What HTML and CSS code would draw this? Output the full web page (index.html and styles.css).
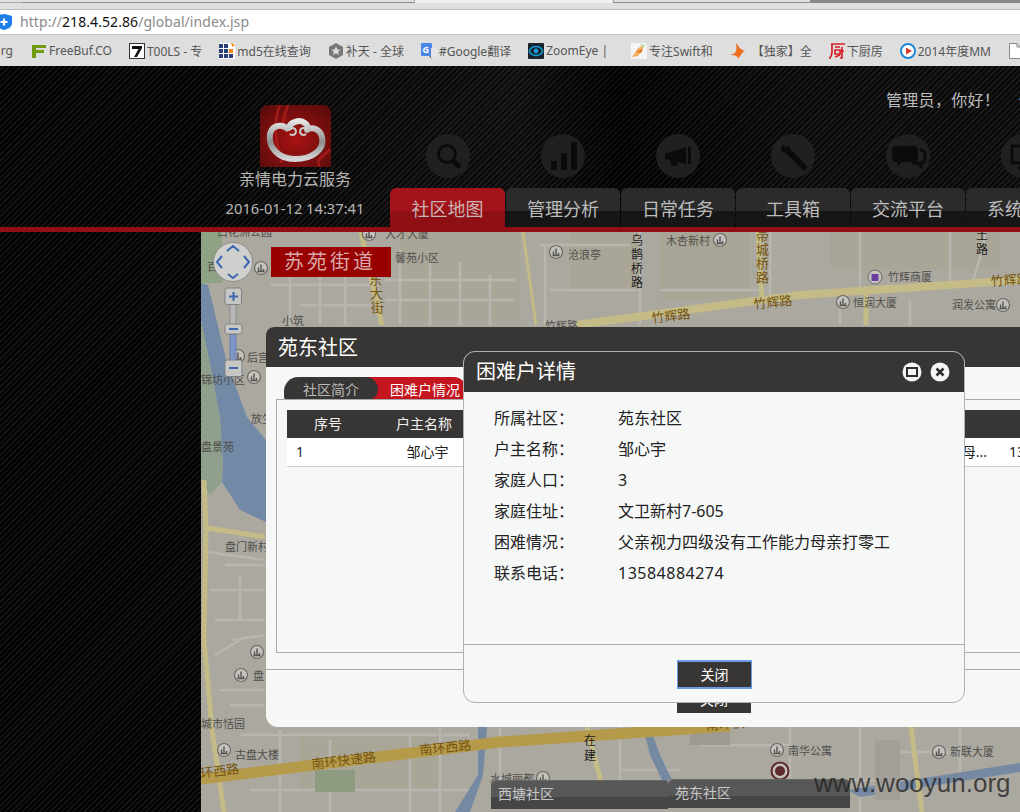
FILE: index.html
```html
<!DOCTYPE html>
<html lang="zh">
<head>
<meta charset="utf-8">
<title>亲情电力云服务</title>
<link rel="stylesheet" href="styles.css">
</head>
<body>
<div class="browser">
  <div class="tabstrip"><span class="ts ts-a"></span><span class="ts ts-b"></span><span class="ts ts-c"></span><span class="ts ts-d"></span></div>
  <div class="urlbar">
    <svg class="shield" width="12" height="17" viewBox="0 0 12 17"><path d="M-4 1 L5 0 L12 2 V9 C12 13 8 15 4 16 C0 15 -4 13 -4 9Z" fill="#1e7fe8"/><path d="M4 4.500V11.500M0.500 8H7.500" stroke="#fff" stroke-width="2.200"/></svg>
    <span class="url"><span class="url-dim">http://</span><span class="url-host">218.4.52.86</span><span class="url-dim">/global/index.jsp</span></span>
  </div>
  <div class="bookmarks">
    <span class="bm bm-first">rg</span>
    <span class="bm"><svg width="16" height="16" viewBox="0 0 16 16"><path d="M1 2H15V5H5V7H13V10H5V15H1Z" fill="#6f9a12"/></svg>FreeBuf.CO</span>
    <span class="bm"><svg width="16" height="16" viewBox="0 0 16 16"><rect x=".5" y=".5" width="15" height="15" fill="#fff" stroke="#333"/><path d="M3 3H13V5L8 14H5L9.500 6H3Z" fill="#111"/></svg>T00LS - 专</span>
    <span class="bm"><svg width="16" height="16" viewBox="0 0 16 16"><rect width="16" height="16" fill="#fff"/><path d="M0 1h4v4H0zM5 1h4v4H5zM0 6h4v4H0zM5 6h4v4H5zM0 11h4v4H0zM5 11h4v4H5zM10 11h4v4h-4z" fill="#2a3f78"/><rect x="10" y="6" width="4" height="4" fill="#ef8410"/><path d="M13 0l1 1 1-1-.5 1.500L16 3h-2l-1 1V2L11.500 1z" fill="#ef8410"/></svg>md5在线查询</span>
    <span class="bm"><svg width="16" height="16" viewBox="0 0 16 16"><path d="M8 0L15 4V12L8 16L1 12V4Z" fill="#777"/><path d="M8 3.500l1.400 3 3.100.3-2.400 2 .8 3.200L8 10.300 5.100 12l.8-3.200-2.400-2 3.100-.3z" fill="#ddd"/></svg>补天 - 全球</span>
    <span class="bm"><svg width="16" height="16" viewBox="0 0 16 16"><rect width="11" height="13" rx="1" fill="#4a86e8"/><path d="M8 13l3 3v-3z" fill="#555"/><rect x="10" y="5" width="6" height="10" fill="#e4e4e4"/><text x="1.500" y="10" class="bm-g">G</text></svg>#Google翻译</span>
    <span class="bm"><svg width="16" height="16" viewBox="0 0 16 16"><rect width="16" height="16" rx="1" fill="#16232c"/><ellipse cx="8" cy="8" rx="6.500" ry="4.500" fill="none" stroke="#0e9ad8" stroke-width="1.600"/><circle cx="8" cy="8" r="2.400" fill="#0e9ad8"/></svg>ZoomEye |<span class="bm-pad"></span></span>
    <span class="bm"><svg width="16" height="16" viewBox="0 0 16 16"><rect width="16" height="16" fill="#f4f4f4"/><path d="M1 14L7 5l6-3-2 6-4 5z" fill="#f4b060"/><path d="M9 1l5 1-2 3z" fill="#b8d8a0"/><path d="M5 9l7-3-2 4z" fill="#e07a20"/></svg>专注Swift和</span>
    <span class="bm bm-wide"><svg width="16" height="16" viewBox="0 0 16 16"><path d="M6 0C9 3 9 6 15 8C12 9 11 12 8 16C8 13 6 12 0 12C4 11 8 10 6 0Z" fill="#ee6c1c"/></svg>【独家】全</span>
    <span class="bm"><svg width="16" height="16" viewBox="0 0 16 16"><path d="M2 1H16M3 1V9C3 12 2 14 0 16M6 4H11M6 7H11V11H6ZM6 14L11 12M13 4V15L11 15M11 8L15 8" stroke="#d5222a" stroke-width="1.700" fill="none"/></svg>下厨房</span>
    <span class="bm"><svg width="16" height="16" viewBox="0 0 16 16"><circle cx="8" cy="8" r="7" fill="#fff" stroke="#2087d6" stroke-width="2"/><path d="M6 4.500L12 8 6 11.500Z" fill="#e0382a"/></svg>2014年度MM</span>
    <span class="bm"><svg width="14" height="16" viewBox="0 0 14 16"><path d="M1.500 .5H9L12.500 4V15.500H1.500Z" fill="#fff" stroke="#888"/><path d="M9 .5V4H12.500" fill="none" stroke="#888"/></svg></span>
  </div>
  <div class="app">
    <header class="header">
      <div class="brand">
        <svg class="logo" width="71" height="62" viewBox="0 0 71 62">
          <defs>
            <radialGradient id="logobg" cx="50%" cy="55%" r="65%"><stop offset="0" stop-color="#a81212"/><stop offset="1" stop-color="#5e0c0c"/></radialGradient>
            <linearGradient id="silver" x1="0" y1="0" x2="0" y2="1"><stop offset="0" stop-color="#e4e4e4"/><stop offset=".55" stop-color="#8d8d8d"/><stop offset="1" stop-color="#d5d5d5"/></linearGradient>
          </defs>
          <path d="M9 0H62Q71 0 71 9V62H0V9Q0 0 9 0Z" fill="url(#logobg)"/>
          <path d="M20 0C14 14 14 34 22 58M28 0C24 10 22 18 24 26M60 62C54 54 66 50 70 44" stroke="#b0201c" stroke-width="3" fill="none" opacity=".7"/>
          <path d="M29 25C22 18 12 20 10 29C8 42 18 54 35 54C52 54 65 45 62 32C60 24 52 21 47 25C50 20 42 14 35 17C31 18 29 21 29 25" fill="none" stroke="url(#silver)" stroke-width="6" stroke-linejoin="round"/>
          <path d="M29 26a3.500 3.500 0 1 1 1 3M47 26a3.500 3.500 0 1 0-1 3" fill="none" stroke="#ccc" stroke-width="2"/>
        </svg>
        <div class="brand-name">亲情电力云服务</div>
        <div class="brand-time">2016-01-12 14:37:41</div>
      </div>
      <div class="head-main">
        <div class="userline"><span class="user-hello">管理员，你好！</span><span class="user-link">修改密码</span></div>
        <nav class="nav">
          <div class="nav-item">
            <svg class="nav-icon" width="44" height="44" viewBox="0 0 44 44"><circle cx="22" cy="22" r="22" class="ic-bg"/><circle cx="21" cy="20" r="8.500" class="ic-line"/><path d="M27 27L34 33" class="ic-line ic-thick"/></svg>
            <a class="nav-tab nav-tab-on">社区地图</a>
          </div>
          <div class="nav-item">
            <svg class="nav-icon" width="44" height="44" viewBox="0 0 44 44"><circle cx="22" cy="22" r="22" class="ic-bg"/><path d="M10 27h6v9h-6zM20 19h6v17h-6zM30 8h6v28h-6z" class="ic-fill"/></svg>
            <a class="nav-tab">管理分析</a>
          </div>
          <div class="nav-item">
            <svg class="nav-icon" width="44" height="44" viewBox="0 0 44 44"><circle cx="22" cy="22" r="22" class="ic-bg"/><path d="M9 20L30 13V30L9 25ZM14 26L16 32H22L21 28M32 13H35V30H32Z" class="ic-fill"/></svg>
            <a class="nav-tab">日常任务</a>
          </div>
          <div class="nav-item">
            <svg class="nav-icon" width="44" height="44" viewBox="0 0 44 44"><circle cx="22" cy="22" r="22" class="ic-bg"/><path d="M16 16L33 33" class="ic-line ic-wide"/><path d="M10 13L13 10L14 14L17 11L19 14L18 18L14 19L10 17Z" class="ic-fill"/></svg>
            <a class="nav-tab">工具箱</a>
          </div>
          <div class="nav-item">
            <svg class="nav-icon" width="44" height="44" viewBox="0 0 44 44"><circle cx="22" cy="22" r="22" class="ic-bg"/><path d="M6 16Q6 12 10 12H28Q32 12 32 16V24Q32 28 28 28H16L11 32V28H10Q6 28 6 24Z" class="ic-fill"/><path d="M34 16Q39 16 39 20V25Q39 29 35 29V32L31 29H26" class="ic-line"/></svg>
            <a class="nav-tab">交流平台</a>
          </div>
          <div class="nav-item">
            <svg class="nav-icon" width="44" height="44" viewBox="0 0 44 44"><circle cx="22" cy="22" r="22" class="ic-bg"/><path d="M11 12H33V29H11ZM17 34H27" class="ic-line"/></svg>
            <a class="nav-tab">系统管理</a>
          </div>
        </nav>
      </div>
    </header>
    <div class="content">
      <div class="side"></div>
      <div class="map">
        <svg class="map-art" width="819" height="580" viewBox="201 232 819 580">
          <defs>
            <g id="poi"><circle r="6.500" fill="#c4c2bc" stroke="#6a6864" stroke-width="1.200"/><path d="M-3.500 3.500H3.500M-2.500 3.500V-.5M0 3.500V-3.500M2.500 3.500V1" fill="none" stroke="#55534f" stroke-width="1.400"/></g>
          </defs>
          <rect x="201" y="232" width="819" height="580" fill="#aba8a0"/>
          <path d="M400 232H520V320H400ZM570 232H640V290H570ZM660 232H750V300H660ZM830 232H1000V270H830ZM300 735H440V790H300Z" fill="#a9a698"/>
          <path d="M201 232H222V283H201Z" fill="#8ea284"/>
          <path d="M201 320L210 363L220 417L223 463L222 482L210 495L201 480Z" fill="#8fa08c"/>
          <path d="M201 283L208 285L227 363L247 417L266 440V522L240 510L222 482L223 463L220 417L210 363L201 320Z" fill="#738aa6"/>
          <path d="M290 250H360M270 285H370M300 305H372M290 262V325M320 260V325M345 262V325M385 280H515M400 250V325M430 262V325M460 262V325M490 275V325M385 300H515" class="minor"/>
          <path d="M540 245H630M550 290H640M545 245V325M640 232V325M660 290H760M770 232V300M860 232V290M950 232V285M840 300V325M910 300V325M985 232C985 250 975 270 972 285" class="minor"/>
          <path d="M207 552L265 560M225 565H265M210 590H265M215 620H265M232 640L265 635M215 655L240 640M220 690H265M230 705H265M240 575V620" class="minor"/>
          <path d="M240 735H470M250 790H470M280 730V812M330 740V812M410 735V812M440 728V812M500 728V780M620 727V812M700 745H790M790 727V812M860 727V812M880 752H960M960 727V775M620 770H680M840 780H880" class="minor"/>
          <path d="M478 727H487L483 775L470 812H455L478 775ZM643 727H650L660 755L672 780H662L650 755ZM848 790L1020 763V772L860 797Z" fill="#7589a3"/>
          <rect x="315" y="770" width="40" height="22" fill="#8d9c80"/>
          <path d="M690 727H730V745H690Z" fill="#9d9a92"/>
          <path d="M875 740H900V800H875Z" fill="#a19f98"/>
          <path d="M576 325L800 295L1020 280" class="yroad"/>
          <path d="M758 232L762 300M361 232L382 325M204 480L206 530L204 640L212 730L224 812M207 528L265 537M911 727L922 812M866 290V325M587 727L603 790" class="yroad yroad-s"/>
          <path d="M523 232L536 325" class="yroad yroad-t"/>
          <path d="M201 779L500 742L730 726" class="hroad"/>
          <g class="lbl">
            <text x="217" y="236">白花洲公园</text><text x="385" y="238">大才大厦</text><text x="395" y="262">馨苑小区</text>
            <text x="568" y="259">沧浪亭</text><text x="666" y="245">木杏新村</text><text x="888" y="281">竹辉商厦</text>
            <text x="853" y="307">恒润大厦</text><text x="952" y="309">润发公寓</text><text x="282" y="325">小筑</text>
            <text x="207" y="271">百</text><text x="247" y="362">后宫</text><text x="201" y="384">锦坊小区</text>
            <text x="251" y="423">放生</text><text x="201" y="451">盘景苑</text><text x="225" y="551">盘门新村</text>
            <text x="253" y="680">盘</text><text x="201" y="728">城市恬园</text><text x="235" y="759">古盘大楼</text>
            <text x="490" y="783">水城丽都</text><text x="788" y="755">南华公寓</text><text x="950" y="756">新联大厦</text>
            <text x="545" y="330">竹辉路</text>
          </g>
          <g class="lbl lbl-v">
            <text x="637" y="245">乌</text><text x="637" y="259">鹊</text><text x="637" y="273">桥</text><text x="637" y="287">路</text>
            <text x="982" y="240">土</text><text x="982" y="254">路</text>
            <text x="590" y="745">在</text><text x="590" y="760">建</text>
          </g>
          <g class="lbl lbl-road">
            <text x="756" y="240">帯</text><text x="756" y="254">城</text><text x="756" y="268">桥</text><text x="756" y="282">路</text>
            <text x="369" y="284">东</text><text x="370" y="298">大</text><text x="371" y="312">街</text>
            <text transform="translate(652 323) rotate(-7)">竹辉路</text>
            <text transform="translate(754 309) rotate(-6)">竹辉路</text>
            <text transform="translate(991 286) rotate(-4)">竹辉路</text>
            <text transform="translate(201 778) rotate(-7)">环西路</text>
            <text transform="translate(312 769) rotate(-7)">南环快速路</text>
            <text transform="translate(420 755) rotate(-6)">南环西路</text>
            <text transform="translate(706 730) rotate(-4)">南环快</text>
          </g>
          <use href="#poi" x="556" y="252"/><use href="#poi" x="720" y="240"/><use href="#poi" x="843" y="302"/><use href="#poi" x="1003" y="305"/>
          <use href="#poi" x="261" y="268"/><use href="#poi" x="238" y="356"/><use href="#poi" x="254" y="377"/><use href="#poi" x="257" y="652"/>
          <use href="#poi" x="241" y="675"/><use href="#poi" x="224" y="750"/><use href="#poi" x="543" y="778"/><use href="#poi" x="777" y="750"/><use href="#poi" x="939" y="752"/><use href="#poi" x="369" y="234"/>
          <circle cx="875" cy="277" r="7" fill="#c4c2bc" stroke="#6a6864"/><path d="M871.500 274H878.500V281H871.500Z" fill="#6a3ea0"/>
          <circle cx="780" cy="771" r="8.500" fill="#c4c2bc" stroke="#5c2a2a" stroke-width="2"/><circle cx="780" cy="771" r="5" fill="#5c2a2a"/>
          <circle cx="233" cy="262" r="19.500" fill="#cfcfcd" stroke="#8c8c8c"/>
          <path d="M227 251L233 246L239 251M222 256L217 262L222 268M228 274L233 278L238 274M244 256L249 262L244 268" fill="none" stroke="#3d66ae" stroke-width="2"/>
          <rect x="230" y="304" width="6" height="22" fill="#b8b8b6" stroke="#8c8c8c"/>
          <rect x="230" y="334" width="6" height="28" fill="#7d97c6" stroke="#6a7fa6"/>
          <rect x="225" y="288" width="16.500" height="16.500" rx="2" class="zoom-btn"/><path d="M229 296.500H238M233.500 292V301" class="zoom-sign"/>
          <rect x="225" y="324" width="17" height="10" rx="2" class="zoom-btn"/><path d="M229 329H238" class="zoom-sign"/>
          <rect x="225" y="360" width="17" height="16.500" rx="2" class="zoom-btn"/><path d="M229 368H238" class="zoom-sign"/>
        </svg>
        <div class="street">苏苑街道</div>
        <div class="ctab ctab-a"><div class="ctab-head">西塘社区</div></div>
        <div class="ctab ctab-b"><div class="ctab-head">苑东社区</div></div>
        <div class="watermark">www.wooyun.org</div>
      </div>
      <section class="modal-main">
        <h2 class="modal-head modal-head-main">苑东社区</h2>
        <div class="modal-main-body">
          <div class="subtabs">
            <span class="subtab">社区简介</span>
            <span class="subtab subtab-on">困难户情况</span>
          </div>
          <div class="tabpanel">
            <div class="trow thead"><span class="c-no">序号</span><span class="c-name">户主名称</span><span class="c-desc"></span><span class="c-tel"></span></div>
            <div class="trow tbody"><span class="c-no c-left">1</span><span class="c-name c-name-val">邹心宇</span><span class="c-desc">母...</span><span class="c-tel">13584884274</span></div>
          </div>
        </div>
        <div class="modal-main-foot"><button class="btn btn-under">关闭</button></div>
      </section>
      <section class="modal-detail">
        <div class="detail-head">
          <h2 class="detail-title">困难户详情</h2>
          <div class="win-btns">
            <svg width="20" height="20" viewBox="0 0 20 20"><circle cx="10" cy="10" r="9.500" fill="#f4f4f4"/><rect x="5" y="6" width="10" height="8" fill="none" stroke="#2f2d2b" stroke-width="2"/></svg>
            <svg width="20" height="20" viewBox="0 0 20 20"><circle cx="10" cy="10" r="9.500" fill="#f4f4f4"/><path d="M6.500 6.500L13.500 13.500M13.500 6.500L6.500 13.500" stroke="#2f2d2b" stroke-width="2.500"/></svg>
          </div>
        </div>
        <dl class="detail-body">
          <div class="drow"><dt>所属社区：</dt><dd>苑东社区</dd></div>
          <div class="drow"><dt>户主名称：</dt><dd>邹心宇</dd></div>
          <div class="drow"><dt>家庭人口：</dt><dd>3</dd></div>
          <div class="drow"><dt>家庭住址：</dt><dd>文卫新村7-605</dd></div>
          <div class="drow"><dt>困难情况：</dt><dd>父亲视力四级没有工作能力母亲打零工</dd></div>
          <div class="drow"><dt>联系电话：</dt><dd class="dd-num">13584884274</dd></div>
        </dl>
        <div class="detail-foot"><button class="btn btn-focus">关闭</button></div>
      </section>
    </div>
  </div>
</div>
</body>
</html>
```
FILE: styles.css
```css
* { box-sizing: border-box; }
html, body { margin: 0; padding: 0; }
body { width: 1020px; height: 812px; overflow: hidden; font-family: "Noto Sans", "Noto Sans CJK SC", sans-serif; background: #000; }
.browser { display: flex; flex-direction: column; width: 1020px; height: 812px; overflow: hidden; }

.tabstrip { display: flex; height: 10px; flex: none; background: #e0e0e0; border-bottom: 1px solid #bdbdbd; align-items: flex-start; }
.ts { display: block; height: 3px; border-bottom: 1px solid #8c8c8c; }
.ts-a { width: 22px; border-bottom-color: #aaa; }
.ts-b { width: 393px; background: #e4e2e0; border-right: 1px solid #aaa; }
.ts-c { width: 197px; background: #efefef; border-bottom: 0; margin-right: 1px; }
.ts-d { width: 197px; background: #dedede; border-left: 1px solid #aaa; }
.tabstrip::after { content: ""; display: block; height: 3px; width: 210px; background: #8a8a8a; }

.urlbar { display: flex; align-items: center; height: 25px; flex: none; background: #fff; border-bottom: 1px solid #c6c6c6; gap: 8px; }
.shield { flex: none; }
.url { font-size: 14px; letter-spacing: .07px; line-height: 24px; white-space: nowrap; }
.url-dim { color: #8a8a8a; }
.url-host { color: #111; }

.bookmarks { display: flex; align-items: center; gap: 17px; height: 31px; flex: none; background: #dedede; font-size: 12px; color: #555; white-space: nowrap; overflow: hidden; padding-left: 18px; }
.bm { display: flex; align-items: center; gap: 2px; flex: none; }
.bm-first { margin-left: -18px; margin-right: 1px; width: 13px; justify-content: flex-end; overflow: hidden; }
.bm-pad { width: 4px; }
.bm-g { font-size: 9px; font-weight: 700; fill: #fff; }
.bm-wide svg { margin-right: 4px; }

.app { flex: 1; min-height: 0; display: flex; flex-direction: column; position: relative; background: repeating-linear-gradient(135deg, #000 0 2px, #121212 2px 4px); }
.header { display: flex; height: 166px; flex: none; border-bottom: 5px solid #8f0f14; background: linear-gradient(90deg, transparent 200px, rgba(255,255,255,.02) 300px, rgba(255,255,255,.04) 520px, rgba(0,0,0,.3) 620px, rgba(255,255,255,.03) 800px); overflow: hidden; }
.brand { width: 180px; margin-left: 205px; margin-right: 5px; flex: none; display: flex; flex-direction: column; align-items: center; padding-top: 39px; color: #b7b7b7; }
.logo { display: block; flex: none; }
.brand-name { font-size: 16px; line-height: 24px; }
.brand-time { font-size: 14.700px; line-height: 20px; margin-top: 7px; white-space: nowrap; }
.head-main { flex: none; width: 800px; display: flex; flex-direction: column; }
.userline { display: flex; gap: 19px; padding: 22px 0 0 496px; font-size: 16px; line-height: 24px; color: #bcbcbc; height: 46px; white-space: nowrap; }
.user-hello { letter-spacing: .3px; }
.user-link { color: #bcbcbc; }
.nav { display: flex; margin-top: 22px; }
.nav-item { width: 115px; flex: none; display: flex; flex-direction: column; align-items: center; }
.nav-icon { display: block; flex: none; }
.ic-bg { fill: #202020; }
.ic-fill { fill: #0b0b0b; }
.ic-line { fill: none; stroke: #0b0b0b; stroke-width: 3; }
.ic-thick { stroke-width: 5; }
.ic-wide { stroke-width: 6; stroke-linecap: round; }
.nav-tab { display: block; width: 114px; align-self: flex-end; height: 39px; margin-top: 10px; border-radius: 6px 6px 0 0; text-align: center; font-size: 18px; line-height: 42px; color: #bdbdbd; background: linear-gradient(#2b2b2b 0 23px, #161616 23px); white-space: nowrap; }
.nav-tab-on { width: 115px; background: linear-gradient(#a5131a 0 23px, #8e0f14 23px); color: #c9b4b4; }

.content { flex: 1; min-height: 0; display: flex; position: relative; }
.side { width: 201px; flex: none; }
.map { flex: 1; min-width: 0; position: relative; overflow: hidden; }
.map-art { display: block; }
.minor { fill: none; stroke: #b8b6af; stroke-width: 2.500; }
.yroad { fill: none; stroke: #c4bb86; stroke-width: 8; }
.yroad-s { stroke-width: 5; }
.yroad-t { stroke-width: 3; }
.hroad { fill: none; stroke: #b59a4a; stroke-width: 11; }
.lbl { font-size: 11px; fill: #4f4e4b; }
.lbl-v { fill: #1d1d1d; font-size: 12px; text-anchor: middle; }
.lbl-road { fill: #75540f; font-size: 13px; text-anchor: start; }
.zoom-btn { fill: #c6c6c4; stroke: #808080; }
.zoom-sign { fill: none; stroke: #3d66ae; stroke-width: 2; }
.street { position: absolute; left: 70px; top: 15px; width: 120px; height: 30px; background: #990000; color: #d8aaaa; font-size: 20px; line-height: 30px; letter-spacing: 3px; padding-left: 13px; white-space: nowrap; }
.ctab { position: absolute; background: #a9a79f; box-shadow: 0 -1px 0 #666; border-radius: 5px 5px 0 0; overflow: hidden; height: 40px; }
.ctab-a { left: 290px; top: 549px; width: 179px; }
.ctab-b { left: 467px; top: 548px; width: 182px; }
.ctab-head { height: 28px; padding-left: 7px; background: linear-gradient(#575757 0 16px, #454545 16px); color: #c8c8c8; font-size: 14px; line-height: 26px; }
.watermark { position: absolute; left: 613px; top: 538px; font-family: "Liberation Sans", sans-serif; font-size: 26px; line-height: 26px; color: rgba(35, 35, 35, .78); white-space: nowrap; }

.modal-main { position: absolute; z-index: 1; isolation: isolate; left: 266px; top: 95px; width: 800px; height: 400px; background: #f6f8f8; border-radius: 8px 8px 0 12px; overflow: hidden; }
.modal-head { margin: 0; font-weight: 400; }
.modal-head-main { height: 40px; background: #383634; color: #fff; font-size: 20px; line-height: 42px; padding-left: 12px; }
.modal-main-body { height: 302px; padding: 10px 0 0 10px; }
.subtabs { display: flex; height: 23px; padding-left: 8px; }
.subtab { display: block; position: relative; z-index: 1; width: 94px; height: 23px; background: #383634; color: #b9b9b9; font-size: 14px; line-height: 25px; text-align: center; border-radius: 16px 14px 12px 4px; white-space: nowrap; }
.subtab-on { z-index: 0; width: 100px; margin-left: -12px; background: #c5161f; color: #fff; text-align: left; padding-left: 24px; border-radius: 0 12px 0 0; }
.tabpanel { height: 254px; margin-top: -1px; border: 1px solid #a9a9a9; padding: 10px 0 0 10px; position: relative; z-index: 2; background: #f6f8f8; }
.trow { display: flex; font-size: 14px; }
.thead { height: 28px; line-height: 28px; background: #383634; color: #f0f0f0; }
.tbody { height: 29px; line-height: 28px; background: #fff; border-bottom: 1px solid #ccc; color: #222; }
.c-no { width: 82px; flex: none; text-align: center; }
.c-left { text-align: left; padding-left: 9px; }
.c-name { width: 110px; flex: none; text-align: center; }
.c-name-val { padding-left: 7px; }
.c-desc { width: 530px; flex: none; text-align: right; padding-right: 22px; }
.c-tel { flex: none; white-space: nowrap; }
.modal-main-foot { border-top: 1px solid #a9a9a9; padding: 17px 0 0 411px; }
.btn { display: block; width: 74px; height: 26px; border: 0; border-radius: 0; background: #383634; color: #fff; font: inherit; font-size: 14px; line-height: 26px; padding: 0; }

.modal-detail { position: absolute; z-index: 2; left: 463px; top: 119px; width: 502px; height: 352px; background: #f6f8f8; border: 1px solid #b0b0b0; border-radius: 12px; overflow: hidden; display: flex; flex-direction: column; }
.detail-head { height: 40px; flex: none; display: flex; align-items: center; justify-content: space-between; background: #383634; padding: 0 14px 0 12px; }
.detail-title { margin: 0; font-size: 20px; font-weight: 400; color: #fff; line-height: 42px; }
.win-btns { display: flex; gap: 8px; }
.win-btns svg { display: block; }
.detail-body { margin: 0; flex: none; height: 252px; padding: 11px 0 0 30px; font-size: 16px; color: #222; }
.drow { display: flex; height: 31px; line-height: 31px; }
.drow dt { width: 124px; flex: none; }
.drow dd { margin: 0; white-space: nowrap; }
.drow .dd-num { letter-spacing: .5px; }
.detail-foot { flex: 1; border-top: 1px solid #aaa; padding: 15px 0 0 213px; }
.btn-focus { height: 29px; width: 75px; border: 1px solid #6c9ae4; border-width: 2px 1px; }
```
